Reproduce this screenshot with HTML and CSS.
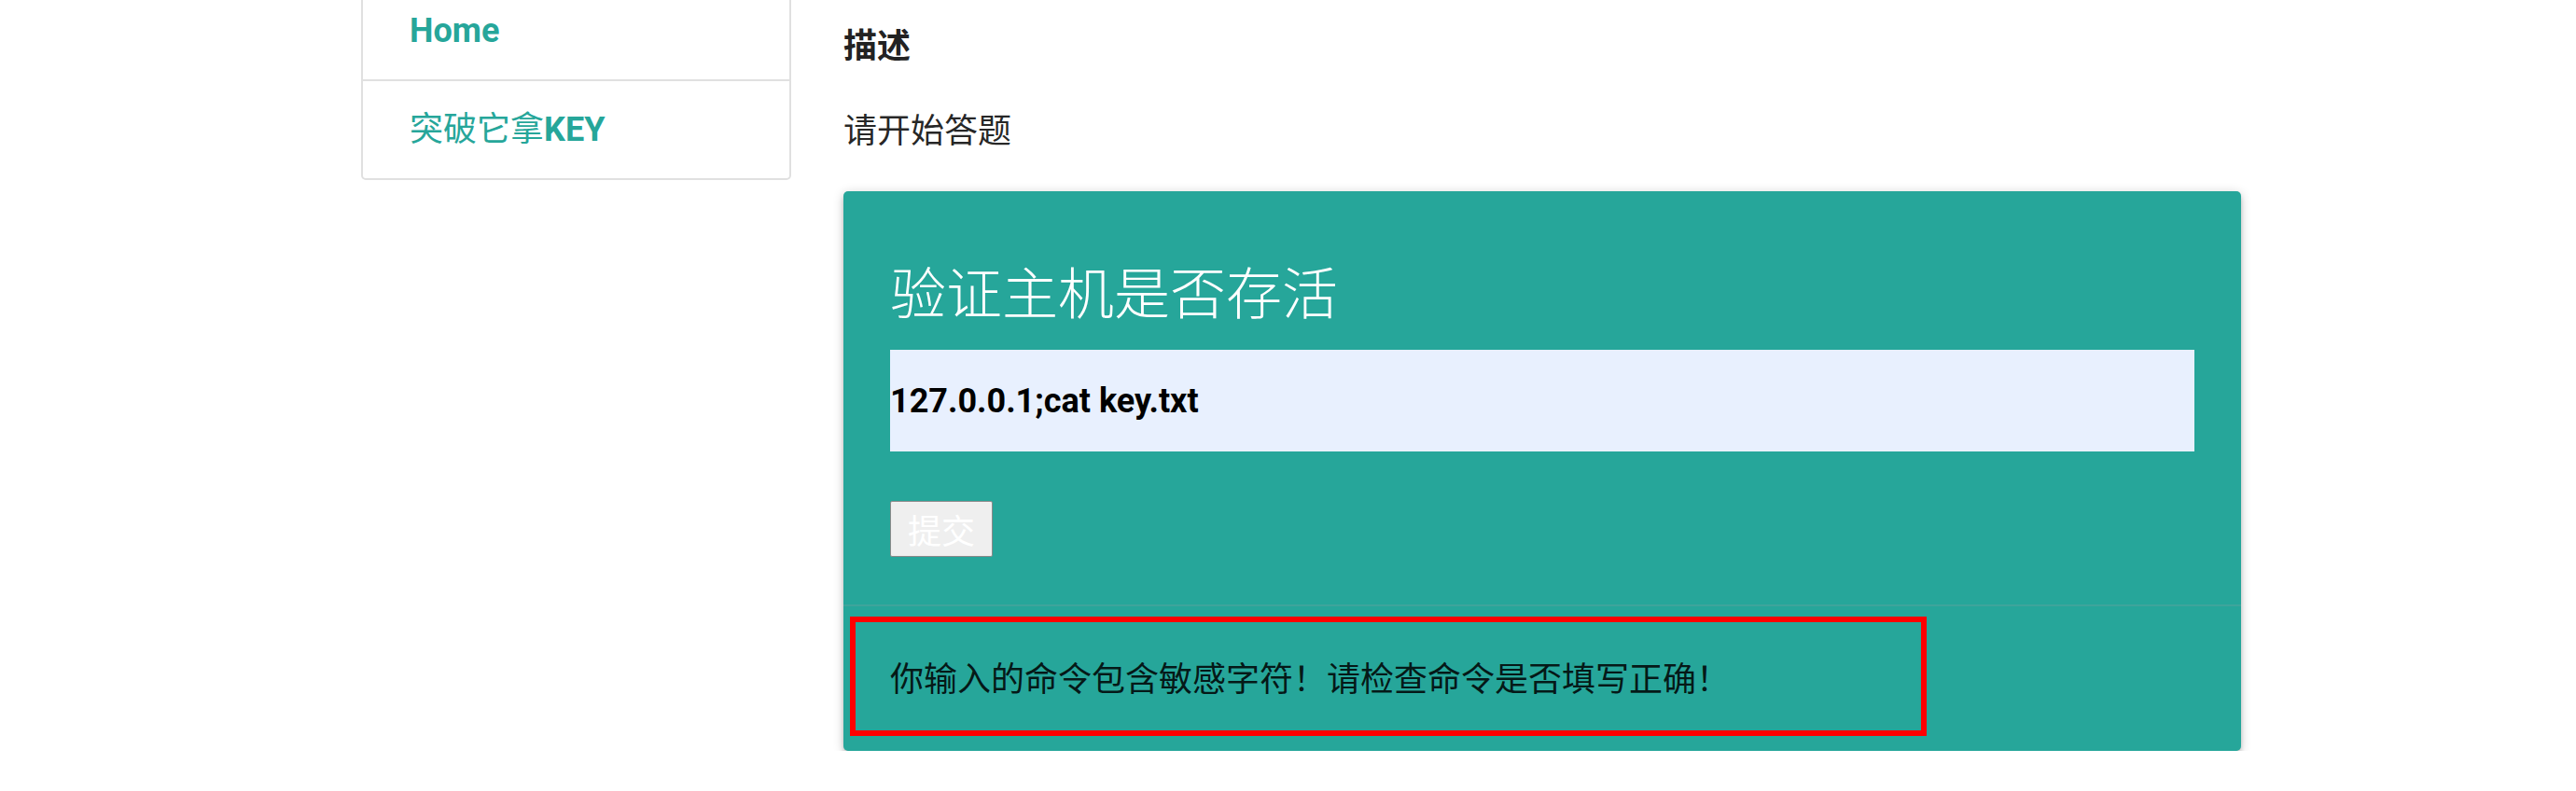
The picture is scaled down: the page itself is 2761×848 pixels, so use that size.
FILE: index.html
```html
<!DOCTYPE html>
<html lang="zh">
<head>
<meta charset="utf-8">
<title>验证主机是否存活</title>
<link rel="stylesheet" href="styles.css">
</head>
<body>
<div class="page">
  <nav class="sidebar">
    <a class="item item-home" href="#">Home</a>
    <a class="item" href="#"><span class="cjk">突破它拿</span>KEY</a>
  </nav>
  <main class="main">
    <h5 class="heading">描述</h5>
    <p class="lead">请开始答题</p>
    <div class="card">
      <div class="card-content">
        <span class="card-title">验证主机是否存活</span>
        <form class="form">
          <input class="cmd" type="text" value="127.0.0.1;cat key.txt">
          <button class="submit" type="button">提交</button>
        </form>
      </div>
      <div class="card-action">
        <p class="msg">你输入的命令包含敏感字符！请检查命令是否填写正确！</p>
        <div class="annot"></div>
      </div>
    </div>
  </main>
</div>
</body>
</html>
```
FILE: styles.css
```css
html, body {
  margin: 0;
  padding: 0;
  background: #ffffff;
}
body {
  font-family: Roboto, "Noto Sans CJK SC", sans-serif;
  font-size: 36px;
  line-height: 54px;
  color: rgba(0, 0, 0, 0.87);
  overflow: hidden;
}
.page {
  display: flex;
  align-items: flex-start;
  gap: 56px;
  padding-left: 387px;
  margin-top: -21px;
}
.sidebar {
  width: 461px;
  box-sizing: border-box;
  border: 2px solid #e0e0e0;
  border-radius: 5px;
  display: flex;
  flex-direction: column;
}
.item {
  display: block;
  padding: 25px 50px;
  line-height: 54px;
  font-size: 36px;
  font-weight: 700;
  color: #26a69a;
  text-decoration: none;
}
.item-home {
  border-bottom: 2px solid #e0e0e0;
}
.item .cjk {
  font-weight: 400;
}
.main {
  width: 1498px;
  padding-top: 44px;
}
.heading {
  margin: 0;
  font-size: 36px;
  line-height: 54px;
  font-weight: 700;
  color: #222;
}
.lead {
  margin: 37px 0 0;
  font-size: 36px;
  line-height: 54px;
}
.card {
  margin-top: 37px;
  background: #26a69a;
  border-radius: 5px;
  box-shadow: 0 5px 5px 0 rgba(0, 0, 0, 0.14), 0 7px 2px -5px rgba(0, 0, 0, 0.12), 0 2px 12px 0 rgba(0, 0, 0, 0.2);
}
.card-content {
  padding: 72px 50px 51px;
}
.card-title {
  display: block;
  font-size: 60px;
  line-height: 80px;
  font-weight: 300;
  color: #ffffff;
}
.form {
  display: flex;
  flex-direction: column;
  align-items: flex-start;
  margin: 18px 0 0;
}
.cmd {
  display: block;
  width: 100%;
  height: 109px;
  box-sizing: border-box;
  margin: 0;
  padding: 0;
  border: none;
  outline: none;
  background: #e8f0fe;
  font-family: Roboto, sans-serif;
  font-size: 36px;
  font-weight: 700;
  color: #000;
}
.submit {
  margin-top: 53px;
  height: 60px;
  box-sizing: border-box;
  padding: 0 18px;
  background: #efefef;
  border: 1px solid #8a8a8a;
  border-radius: 2px;
  font-family: "Noto Sans CJK SC", sans-serif;
  font-size: 36px;
  line-height: 58px;
  color: #ffffff;
}
.card-action {
  position: relative;
  border-top: 2px solid rgba(160, 160, 160, 0.2);
  padding: 52px 50px 49px;
}
.msg {
  margin: 0;
  font-size: 36px;
  line-height: 54px;
  color: rgba(0, 0, 0, 0.87);
}
.annot {
  position: absolute;
  left: 7px;
  top: 11px;
  width: 1154px;
  height: 128px;
  box-sizing: border-box;
  border: 6px solid #ff0000;
}
```
